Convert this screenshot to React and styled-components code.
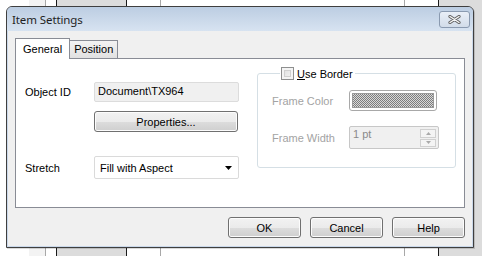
import React from 'react';
import styled, { createGlobalStyle } from 'styled-components';

const GlobalStyle = createGlobalStyle`
  html, body {
    margin: 0;
    padding: 0;
    width: 482px;
    height: 256px;
    overflow: hidden;
    background: #ffffff;
    font-family: "Liberation Sans", Arial, sans-serif;
  }
`;

// desktop behind the dialog
const Desktop = styled.div`
  position: relative;
  width: 482px;
  height: 256px;
  overflow: hidden;
`;

const Backdrop = styled.div`
  display: flex;
  height: 100%;
`;

const Column = styled.div`
  width: ${({ w }) => w}px;
  flex: ${({ grow }) => (grow ? 1 : 'none')};
  background: ${({ bg }) => bg || '#ffffff'};
  border-right: ${({ line }) => (line ? `1px solid ${line}` : 'none')};
`;

const Dialog = styled.div`
  position: absolute;
  left: 6px;
  top: 6px;
  width: 466px;
  height: 240px;
  border: 1px solid #3f3f3f;
  border-radius: 6px 6px 0 0;
  background: #cad8ea;
  display: flex;
  flex-direction: column;
  box-shadow: 1px 1px 0 rgba(0, 0, 0, 0.15);
`;

const TitleBar = styled.div`
  height: 24px;
  display: flex;
  align-items: center;
  justify-content: space-between;
  padding: 0 3px 0 5px;
  background: linear-gradient(#bccde2, #d7e3f1);
  border-radius: 5px 5px 0 0;
`;

const Title = styled.span`
  font-family: "Noto Sans", "DejaVu Sans", sans-serif;
  font-size: 11.5px;
  color: #1f1f1f;
  letter-spacing: -0.1px;
  margin-top: 1px;
`;

const CloseButton = styled.div`
  width: 29px;
  height: 15px;
  margin-top: 1px;
  border: 1px solid #8a9ab0;
  border-radius: 3px;
  background: linear-gradient(#e9eff7, #d2dce9);
  display: flex;
  align-items: center;
  justify-content: center;
`;

const Body = styled.div`
  flex: 1;
  margin: 0 1px 1px 1px;
  background: #f0f0f0;
  padding: 7px 7px 0 7px;
  display: flex;
  flex-direction: column;
`;

const TabStrip = styled.div`
  display: flex;
  align-items: flex-end;
  height: 20px;
`;

const Tab = styled.div`
  position: relative;
  box-sizing: border-box;
  height: ${({ active }) => (active ? 21 : 18)}px;
  margin-bottom: ${({ active }) => (active ? -1 : 0)}px;
  margin-left: ${({ active }) => (active ? 0 : -1)}px;
  z-index: ${({ active }) => (active ? 2 : 1)};
  padding: 0 ${({ active }) => (active ? 7 : 4)}px;
  border: 1px solid #898c95;
  border-bottom: none;
  background: ${({ active }) =>
    active ? '#ffffff' : 'linear-gradient(#f3f3f3, #e1e1e1)'};
  font-size: 11px;
  color: #000;
  line-height: ${({ active }) => (active ? 17 : 17)}px;
  display: flex;
  align-items: center;
`;

const Panel = styled.div`
  box-sizing: border-box;
  height: 150px;
  border: 1px solid #898c95;
  background: #ffffff;
  display: flex;
  padding: 0 0 0 9px;
`;

const LeftColumn = styled.div`
  display: flex;
  flex-direction: column;
  width: 214px;
`;

const Row = styled.div`
  display: flex;
  align-items: center;
  height: ${({ h }) => h}px;
  margin-top: ${({ mt }) => mt}px;
`;

const Label = styled.span`
  width: ${({ w }) => w || 69}px;
  flex: none;
  font-size: 11px;
  color: ${({ disabled }) => (disabled ? '#a3a3a3' : '#000000')};
`;

const ReadOnlyField = styled.div`
  box-sizing: border-box;
  width: 145px;
  height: 20px;
  border: 1px solid #dcdcdc;
  border-radius: 2px;
  background: #f0f0f0;
  font-size: 11px;
  color: #000;
  padding: 2px 0 0 3px;
`;

const PushButton = styled.div`
  box-sizing: border-box;
  width: ${({ w }) => w}px;
  height: 21px;
  margin-left: ${({ ml }) => ml || 0}px;
  border: 1px solid #707070;
  border-radius: 3px;
  background: linear-gradient(#f2f2f2 0%, #ebebeb 50%, #dddddd 51%, #cfcfcf 100%);
  box-shadow: inset 0 0 0 1px #fcfcfc;
  font-size: 11px;
  color: #000;
  display: flex;
  align-items: center;
  justify-content: center;
`;

const Combo = styled.div`
  box-sizing: border-box;
  width: 145px;
  height: 23px;
  border: 1px solid #dadada;
  border-radius: 2px;
  background: #ffffff;
  font-size: 11px;
  color: #000;
  display: flex;
  align-items: center;
  justify-content: space-between;
  padding: 0 6px 0 5px;
`;

const GroupBox = styled.fieldset`
  box-sizing: border-box;
  margin: 8px 0 0 18px;
  width: 199px;
  height: 101px;
  padding: 0 0 0 14px;
  border: 1px solid #d5dfe5;
  border-radius: 3px;
`;

const Legend = styled.legend`
  display: flex;
  align-items: center;
  padding: 0 2px 0 1px;
  margin-left: 8px;
  font-size: 11px;
  color: #000;
`;

const CheckBox = styled.span`
  box-sizing: border-box;
  width: 13px;
  height: 13px;
  margin-right: 3px;
  border: 1px solid #8e8f8f;
  background: linear-gradient(135deg, #dcdcdc, #f6f6f6);
  box-shadow: inset 0 0 0 2px #f4f4f4, inset 0 0 0 3px #d0d0d0;
`;

const GroupGrid = styled.div`
  display: grid;
  grid-template-columns: 77px 90px;
  row-gap: 15px;
  align-items: center;
  margin-top: 10px;
`;

const Swatch = styled.div`
  box-sizing: border-box;
  width: 88px;
  height: 21px;
  border: 1px solid #a8a8a8;
  border-radius: 3px;
  padding: 2px;
  background: #ffffff;
`;

const Hatch = styled.div`
  width: 100%;
  height: 100%;
  border: 1px solid #9a9a9a;
  box-sizing: border-box;
  background: repeating-conic-gradient(#7d7d7d 0 25%, #d8d8d8 0 50%) 0 0 / 2px 2px;
`;

const SpinField = styled.div`
  box-sizing: border-box;
  width: 90px;
  height: 23px;
  border: 1px solid #c7c7c7;
  border-radius: 2px;
  background: #f0f0f0;
  display: flex;
  justify-content: space-between;
  padding: 1px 1px 1px 3px;
  font-size: 11px;
  color: #8a8a8a;
`;

const SpinButtons = styled.div`
  display: flex;
  flex-direction: column;
  gap: 1px;
  width: 16px;
  padding: 1px 1px 0 0;
`;

const SpinButton = styled.div`
  box-sizing: border-box;
  height: 9px;
  border: 1px solid #d0d0d0;
  background: #f4f4f4;
  display: flex;
  align-items: center;
  justify-content: center;
`;

const ButtonRow = styled.div`
  display: flex;
  justify-content: flex-end;
  margin-top: 9px;
  gap: 9px;
`;

const Underline = styled.span`
  text-decoration: underline;
`;

const CloseIcon = () => (
  <svg width="13" height="9" viewBox="0 0 13 9">
    <path d="M2 1.5 L11 7.5 M11 1.5 L2 7.5" stroke="#5e5e5e" strokeWidth="3.2" strokeLinecap="round" />
    <path d="M2 1.5 L11 7.5 M11 1.5 L2 7.5" stroke="#f7f7f7" strokeWidth="1.4" strokeLinecap="round" />
  </svg>
);

const DropArrow = () => (
  <svg width="7" height="4" viewBox="0 0 7 4">
    <path d="M0 0 H7 L3.5 4 Z" fill="#000" />
  </svg>
);

const SpinArrow = ({ up }) => (
  <svg width="5" height="3" viewBox="0 0 5 3">
    <path d={up ? 'M0 3 H5 L2.5 0 Z' : 'M0 0 H5 L2.5 3 Z'} fill="#a9a9a9" />
  </svg>
);

const App = () => (
  <>
    <GlobalStyle />
    <Desktop>
      <Backdrop>
        <Column w={29} />
        <Column w={16} bg="#f3f3f3" line="#a8a8a8" />
        <Column w={10} line="#1a1a1a" />
        <Column w={69} bg="#dcdcdc" line="#1a1a1a" />
        <Column w={33} line="#a8a8a8" />
        <Column w={243} line="#a8a8a8" />
        <Column w={33} line="#1a1a1a" />
        <Column grow bg="#dcdcdc" />
      </Backdrop>

      <Dialog>
        <TitleBar>
          <Title>Item Settings</Title>
          <CloseButton>
            <CloseIcon />
          </CloseButton>
        </TitleBar>

        <Body>
          <TabStrip>
            <Tab active>General</Tab>
            <Tab>Position</Tab>
          </TabStrip>

          <Panel>
            <LeftColumn>
              <Row h={20} mt={23}>
                <Label>Object ID</Label>
                <ReadOnlyField>Document\TX964</ReadOnlyField>
              </Row>
              <Row h={21} mt={9}>
                <PushButton w={144} ml={69}>Properties...</PushButton>
              </Row>
              <Row h={23} mt={24}>
                <Label>Stretch</Label>
                <Combo>
                  Fill with Aspect
                  <DropArrow />
                </Combo>
              </Row>
            </LeftColumn>

            <GroupBox>
              <Legend>
                <CheckBox />
                <Underline>U</Underline>se Border
              </Legend>
              <GroupGrid>
                <Label w={77} disabled>Frame Color</Label>
                <Swatch>
                  <Hatch />
                </Swatch>
                <Label w={77} disabled>Frame Width</Label>
                <SpinField>
                  1 pt
                  <SpinButtons>
                    <SpinButton><SpinArrow up /></SpinButton>
                    <SpinButton><SpinArrow /></SpinButton>
                  </SpinButtons>
                </SpinField>
              </GroupGrid>
            </GroupBox>
          </Panel>

          <ButtonRow>
            <PushButton w={73}>OK</PushButton>
            <PushButton w={73}>Cancel</PushButton>
            <PushButton w={73}>Help</PushButton>
          </ButtonRow>
        </Body>
      </Dialog>
    </Desktop>
  </>
);

export default App;
